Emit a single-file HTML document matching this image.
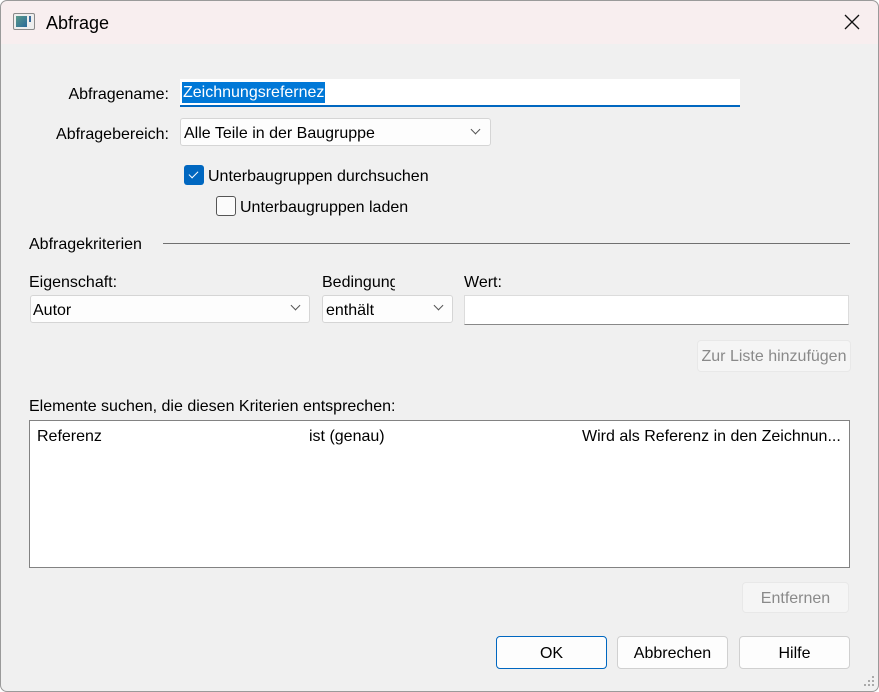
<!DOCTYPE html>
<html><head><meta charset="utf-8"><style>
*{box-sizing:border-box;margin:0;padding:0}
body{width:879px;height:692px;overflow:hidden;background:#fff;font-family:"Liberation Sans",sans-serif;font-size:16px;color:#000}
.win{position:absolute;left:0;top:0;width:879px;height:692px;border-radius:7px;background:#f0f0f0;overflow:hidden}
.frame{position:absolute;left:0;top:0;width:879px;height:692px;border:1px solid #9a9a9a;border-radius:7px;pointer-events:none}
.title{position:absolute;left:0;top:0;width:100%;height:44px;background:#f8eeef}
.a{position:absolute;white-space:nowrap}
.t{margin-top:2px}
.r{position:absolute;white-space:nowrap;text-align:right;margin-top:2px}
.box{position:absolute;background:#fdfdfd;border:1px solid #d5d5d5;border-radius:3px}
.chev{position:absolute;width:7px;height:7px;border-right:1px solid #555;border-bottom:1px solid #555;transform:rotate(45deg)}
.btn{position:absolute;background:#fdfdfd;border:1px solid #d0d0d0;border-radius:4px;text-align:center;line-height:33px;font-size:16px}
.dis{background:#f5f5f5;border-color:#e8e8e8;color:#8a8a8a}
</style></head><body><div class="win">
<div class="title"></div>
<div class="a" style="left:13px;top:13px;width:22px;height:17px;border:1px solid #8a8a8a;border-radius:2px;background:#eee"><div style="position:absolute;left:2px;top:2px;width:11px;height:11px;background:linear-gradient(135deg,#5a9a8a,#2a6a9a)"></div><div style="position:absolute;left:15px;top:2px;width:2px;height:6px;background:#3a6a9a"></div></div>
<div class="a" style="left:46px;top:13px;font-size:18px">Abfrage</div>
<svg class="a" style="left:844px;top:14px" width="16" height="16"><path d="M1 1L15 15M15 1L1 15" stroke="#111" stroke-width="1.3"/></svg>

<div class="r" style="right:710px;top:84px">Abfragename:</div>
<div class="a" style="left:180px;top:79px;width:560px;height:28px;background:#fff;border-bottom:2px solid #0067c0"></div>
<div class="a" style="left:182px;top:82px;height:21px;line-height:21px;background:#0078d7;color:#fff;padding:0 1px">Zeichnungsrefernez</div>

<div class="r" style="right:710px;top:124px">Abfragebereich:</div>
<div class="box" style="left:180px;top:118px;width:311px;height:28px"></div>
<div class="a t" style="left:184px;top:123px">Alle Teile in der Baugruppe</div>
<div class="chev" style="left:472px;top:126px"></div>

<div class="a" style="left:184px;top:165px;width:20px;height:20px;background:#0067c0;border-radius:3px"><div style="position:absolute;left:7px;top:4px;width:5px;height:9px;border-right:1.5px solid #fff;border-bottom:1.5px solid #fff;transform:rotate(45deg)"></div></div>
<div class="a t" style="left:208px;top:166px">Unterbaugruppen durchsuchen</div>
<div class="a" style="left:216px;top:196px;width:20px;height:20px;border:1px solid #555;border-radius:3px;background:#fbfbfb"></div>
<div class="a t" style="left:240px;top:197px">Unterbaugruppen laden</div>

<div class="a t" style="left:29px;top:234px;font-size:16px">Abfragekriterien</div>
<div class="a" style="left:163px;top:243px;width:687px;height:1px;background:#707070"></div>

<div class="a t" style="left:29px;top:272px">Eigenschaft:</div>
<div class="a t" style="left:322px;top:272px;width:73px;overflow:hidden">Bedingung</div>
<div class="a t" style="left:464px;top:272px">Wert:</div>
<div class="box" style="left:30px;top:295px;width:280px;height:28px"></div>
<div class="a t" style="left:33px;top:300px">Autor</div>
<div class="chev" style="left:292px;top:302px"></div>
<div class="box" style="left:322px;top:295px;width:131px;height:28px"></div>
<div class="a t" style="left:326px;top:300px">enthält</div>
<div class="chev" style="left:435px;top:302px"></div>
<div class="a" style="left:464px;top:295px;width:385px;height:30px;background:#fff;border:1px solid #dcdcdc;border-bottom:1px solid #888"></div>

<div class="btn dis" style="left:697px;top:340px;width:154px;height:32px;line-height:32px">Zur Liste hinzufügen</div>

<div class="a t" style="left:29px;top:396px">Elemente suchen, die diesen Kriterien entsprechen:</div>
<div class="a" style="left:29px;top:420px;width:821px;height:148px;background:#fff;border:1px solid #828282"></div>
<div class="a t" style="left:37px;top:426px">Referenz</div>
<div class="a t" style="left:309px;top:426px">ist (genau)</div>
<div class="a t" style="left:582px;top:426px">Wird als Referenz in den Zeichnun...</div>

<div class="btn dis" style="left:742px;top:582px;width:107px;height:31px;line-height:31px">Entfernen</div>

<div class="btn" style="left:496px;top:636px;width:111px;height:33px;border-color:#0067c0">OK</div>
<div class="btn" style="left:617px;top:636px;width:111px;height:33px">Abbrechen</div>
<div class="btn" style="left:739px;top:636px;width:111px;height:33px">Hilfe</div>
<svg class="a" style="left:864px;top:676px" width="12" height="12"><g fill="#aaa"><rect x="8" y="0" width="2" height="2"/><rect x="4" y="4" width="2" height="2"/><rect x="8" y="4" width="2" height="2"/><rect x="0" y="8" width="2" height="2"/><rect x="4" y="8" width="2" height="2"/><rect x="8" y="8" width="2" height="2"/></g></svg>
</div><div class="frame"></div></body></html>
